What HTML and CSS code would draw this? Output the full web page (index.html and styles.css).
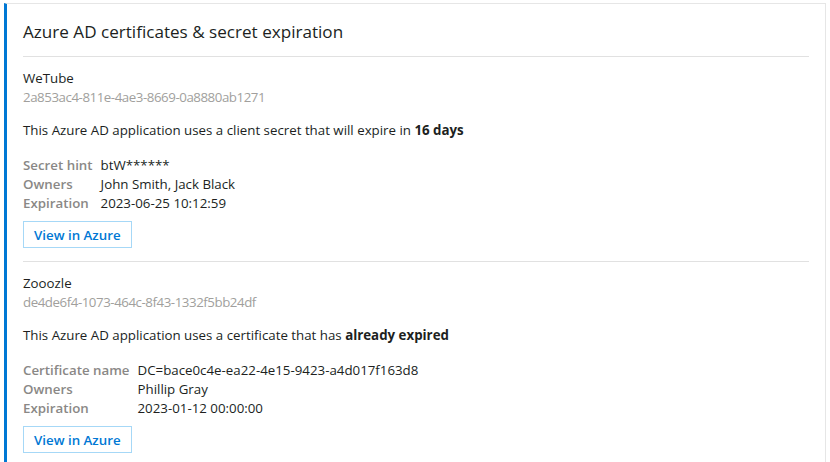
FILE: index.html
```html
<!DOCTYPE html>
<html>
<head>
<meta charset="utf-8">
<link rel="stylesheet" href="styles.css">
</head>
<body>
<div class="card">
  <h2 class="card-title">Azure AD certificates &amp; secret expiration</h2>
  <div class="app">
    <div class="app-name">WeTube</div>
    <div class="app-id">2a853ac4-811e-4ae3-8669-0a8880ab1271</div>
    <p class="app-desc">This Azure AD application uses a client secret that will expire in <strong>16 days</strong></p>
    <table class="props">
      <tr><th>Secret hint</th><td>btW******</td></tr>
      <tr><th>Owners</th><td>John Smith, Jack Black</td></tr>
      <tr><th>Expiration</th><td>2023-06-25 10:12:59</td></tr>
    </table>
    <button class="btn">View in Azure</button>
  </div>
  <div class="app">
    <div class="app-name">Zooozle</div>
    <div class="app-id">de4de6f4-1073-464c-8f43-1332f5bb24df</div>
    <p class="app-desc">This Azure AD application uses a certificate that has <strong>already expired</strong></p>
    <table class="props">
      <tr><th>Certificate name</th><td>DC=bace0c4e-ea22-4e15-9423-a4d017f163d8</td></tr>
      <tr><th>Owners</th><td>Phillip Gray</td></tr>
      <tr><th>Expiration</th><td>2023-01-12 00:00:00</td></tr>
    </table>
    <button class="btn">View in Azure</button>
  </div>
</div>
</body>
</html>
```
FILE: styles.css
```css
html, body {
  margin: 0;
  padding: 0;
  background: #fff;
}
body {
  padding: 3px 4px 0 4px;
  font-family: "Segoe UI", "Open Sans", sans-serif;
  font-size: 13.3px;
  line-height: 19px;
  color: #201f1e;
}
.card {
  border: 1px solid #e6e6e6;
  border-left: 3px solid #0078d4;
  padding: 16px 16px 0 16px;
  height: 470px;
  box-sizing: border-box;
}
.card-title {
  margin: 0;
  font-size: 17.1px;
  line-height: 24px;
  font-weight: 400;
  padding-bottom: 12px;
  border-bottom: 1px solid #e1e1e1;
}
.app {
  padding-top: 12px;
  padding-bottom: 13px;
  border-bottom: 1px solid #e1e1e1;
}
.app-name {
  color: #201f1e;
}
.app-id {
  color: #a19f9d;
  letter-spacing: -0.45px;
}
.app-desc {
  margin: 14px 0 16px 0;
}
.app-desc strong {
  font-weight: 700;
}
.props {
  border-collapse: collapse;
}
.props th {
  text-align: left;
  font-weight: 600;
  color: #8a8886;
  padding: 0 8px 0 0;
  white-space: nowrap;
}
.props td {
  padding: 0;
  color: #201f1e;
}
.btn {
  display: block;
  margin-top: 8px;
  height: 27px;
  padding: 0 10px;
  background: #fff;
  border: 1px solid #a6d8f7;
  color: #0078d4;
  font-family: inherit;
  font-size: 13.3px;
  font-weight: 600;
  cursor: pointer;
}
```
